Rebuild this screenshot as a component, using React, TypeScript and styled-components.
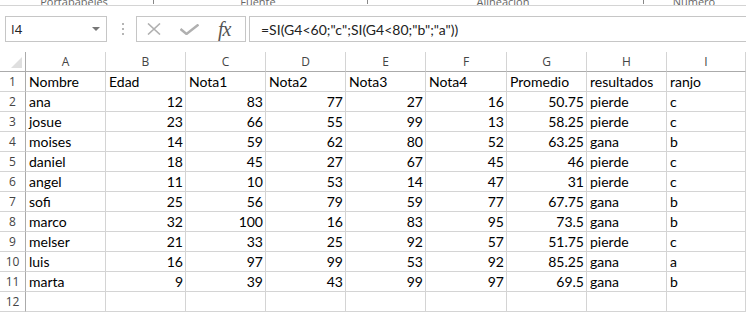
import { Fragment } from 'react';
import styled, { createGlobalStyle } from 'styled-components';

const GlobalStyle = createGlobalStyle`
  html, body {
    margin: 0;
    padding: 0;
    background: #ffffff;
  }
  body {
    width: 746px;
    height: 312px;
    overflow: hidden;
    font-family: Lato, 'Liberation Sans', sans-serif;
  }
`;

const GRID = '#d4d4d4';
const HEAD_LINE = '#ababab';

const Sheet = styled.div`
  display: flex;
  flex-direction: column;
  width: 746px;
  height: 312px;
  overflow: hidden;
`;

// ribbon group captions, only their lower edge is visible above the formula bar
const RibbonStrip = styled.div`
  display: flex;
  align-items: flex-end;
  height: 5px;
  border-bottom: 1px solid ${GRID};
  overflow: hidden;
  background: #ffffff;
`;

const GroupLabel = styled.span<{ $width: number }>`
  width: ${({ $width }) => $width}px;
  flex-shrink: 0;
  text-align: center;
  font-family: 'Open Sans', sans-serif;
  font-size: 11px;
  line-height: 7px;
  color: #666666;
  white-space: nowrap;
`;

const Launcher = styled.span`
  display: inline-block;
  width: 5px;
  height: 4px;
  border-right: 1px solid #888;
  border-top: 1px solid #888;
  flex-shrink: 0;
  margin-bottom: 1px;
`;

const FormulaBar = styled.div`
  display: flex;
  align-items: center;
  height: 26px;
  margin: 10px 0 10px 5px;
`;

const NameBox = styled.div`
  display: flex;
  align-items: center;
  justify-content: space-between;
  box-sizing: border-box;
  width: 102px;
  height: 26px;
  border: 1px solid #c6c6c6;
  padding: 0 6px 0 5px;
  font-family: 'Open Sans', sans-serif;
  font-size: 13px;
  color: #222;
`;

const Caret = styled.span`
  width: 0;
  height: 0;
  border-left: 4px solid transparent;
  border-right: 4px solid transparent;
  border-top: 4px solid #777;
`;

const Grip = styled.div`
  display: flex;
  flex-direction: column;
  gap: 3px;
  margin: 0 12px 0 15px;
  span {
    width: 2px;
    height: 2px;
    background: #b5b5b5;
  }
`;

const ButtonBox = styled.div`
  display: flex;
  align-items: center;
  box-sizing: border-box;
  width: 110px;
  height: 26px;
  border: 1px solid #c6c6c6;
  padding: 0 0 0 10px;
`;

const IconSlot = styled.span<{ $w: number }>`
  display: flex;
  align-items: center;
  justify-content: center;
  width: ${({ $w }) => $w}px;
`;

const Fx = styled.span`
  font-family: 'Liberation Serif', 'DejaVu Serif', serif;
  font-style: italic;
  font-size: 20px;
  color: #555;
  letter-spacing: -1px;
  line-height: 20px;
`;

const FormulaInput = styled.div`
  flex: 1;
  box-sizing: border-box;
  height: 26px;
  margin-left: 3px;
  border-top: 1px solid #c6c6c6;
  border-bottom: 1px solid #c6c6c6;
  border-left: 1px solid #c6c6c6;
  padding: 0 0 0 11px;
  display: flex;
  align-items: center;
  font-family: Lato, sans-serif;
  font-size: 14px;
  color: #222;
  white-space: nowrap;
`;

const Grid = styled.div`
  display: grid;
  grid-template-columns: 26px 80px 80px 80px 80px 80px 81px 80px 80px 1fr;
  grid-auto-rows: 20px;
`;

const ColHead = styled.div<{ $corner?: boolean }>`
  box-sizing: border-box;
  border-right: 1px solid ${({ $corner }) => ($corner ? HEAD_LINE : GRID)};
  border-bottom: 1px solid ${HEAD_LINE};
  display: flex;
  align-items: center;
  justify-content: center;
  font-family: 'Open Sans', sans-serif;
  font-size: 12px;
  color: #444;
  position: relative;
`;

const CornerMark = styled.span`
  position: absolute;
  right: 3px;
  bottom: 3px;
  width: 0;
  height: 0;
  border-left: 11px solid transparent;
  border-bottom: 11px solid #dfdfdf;
`;

const RowHead = styled.div`
  box-sizing: border-box;
  border-right: 1px solid ${HEAD_LINE};
  border-bottom: 1px solid ${GRID};
  display: flex;
  align-items: flex-end;
  justify-content: center;
  padding-bottom: 1px;
  font-family: 'Open Sans', sans-serif;
  font-size: 12px;
  line-height: 17px;
  color: #444;
`;

const Cell = styled.div<{ $num?: boolean }>`
  box-sizing: border-box;
  border-right: 1px solid ${GRID};
  border-bottom: 1px solid ${GRID};
  display: flex;
  align-items: flex-end;
  justify-content: ${({ $num }) => ($num ? 'flex-end' : 'flex-start')};
  padding: 0 2px 1px 3px;
  font-family: Lato, 'Liberation Sans', sans-serif;
  font-size: 14px;
  line-height: 17px;
  color: #000;
  white-space: nowrap;
`;

const letters = ['A', 'B', 'C', 'D', 'E', 'F', 'G', 'H', 'I'];

const header = ['Nombre', 'Edad', 'Nota1', 'Nota2', 'Nota3', 'Nota4', 'Promedio', 'resultados', 'ranjo'];

const rows: (string | number)[][] = [
  ['ana', 12, 83, 77, 27, 16, 50.75, 'pierde', 'c'],
  ['josue', 23, 66, 55, 99, 13, 58.25, 'pierde', 'c'],
  ['moises', 14, 59, 62, 80, 52, 63.25, 'gana', 'b'],
  ['daniel', 18, 45, 27, 67, 45, 46, 'pierde', 'c'],
  ['angel', 11, 10, 53, 14, 47, 31, 'pierde', 'c'],
  ['sofi', 25, 56, 79, 59, 77, 67.75, 'gana', 'b'],
  ['marco', 32, 100, 16, 83, 95, 73.5, 'gana', 'b'],
  ['melser', 21, 33, 25, 92, 57, 51.75, 'pierde', 'c'],
  ['luis', 16, 97, 99, 53, 92, 85.25, 'gana', 'a'],
  ['marta', 9, 39, 43, 99, 97, 69.5, 'gana', 'b'],
];

export default function App() {
  return (
    <Sheet>
      <GlobalStyle />
      <RibbonStrip>
        <GroupLabel $width={148}>Portapapeles</GroupLabel>
        <Launcher />
        <GroupLabel $width={208}>Fuente</GroupLabel>
        <Launcher />
        <GroupLabel $width={270}>Alineación</GroupLabel>
        <Launcher />
        <GroupLabel $width={100}>Número</GroupLabel>
      </RibbonStrip>

      <FormulaBar>
        <NameBox>
          I4
          <Caret />
        </NameBox>
        <Grip>
          <span />
          <span />
          <span />
        </Grip>
        <ButtonBox>
          <IconSlot $w={14}>
            <svg width="14" height="12" viewBox="0 0 14 12">
              <path d="M1 0.5 L13 11.5 M13 0.5 L1 11.5" stroke="#b0b0b0" strokeWidth="1.6" fill="none" />
            </svg>
          </IconSlot>
          <IconSlot $w={57}>
            <svg width="19" height="11" viewBox="0 0 19 11">
              <path d="M0.5 5 L6.5 10 L18.5 0.5" stroke="#b0b0b0" strokeWidth="2.4" fill="none" />
            </svg>
          </IconSlot>
          <Fx>fx</Fx>
        </ButtonBox>
        <FormulaInput>=SI(G4&lt;60;"c";SI(G4&lt;80;"b";"a"))</FormulaInput>
      </FormulaBar>

      <Grid>
        <ColHead $corner>
          <CornerMark />
        </ColHead>
        {letters.map((l) => (
          <ColHead key={l}>{l}</ColHead>
        ))}

        <RowHead>1</RowHead>
        {header.map((h) => (
          <Cell key={h}>{h}</Cell>
        ))}

        {rows.map((r, i) => (
          <Fragment key={i}>
            <RowHead>{i + 2}</RowHead>
            {r.map((v, j) => (
              <Cell key={j} $num={typeof v === 'number'}>
                {v}
              </Cell>
            ))}
          </Fragment>
        ))}

        <RowHead>12</RowHead>
        {letters.map((l) => (
          <Cell key={`e${l}`} />
        ))}
      </Grid>
    </Sheet>
  );
}
